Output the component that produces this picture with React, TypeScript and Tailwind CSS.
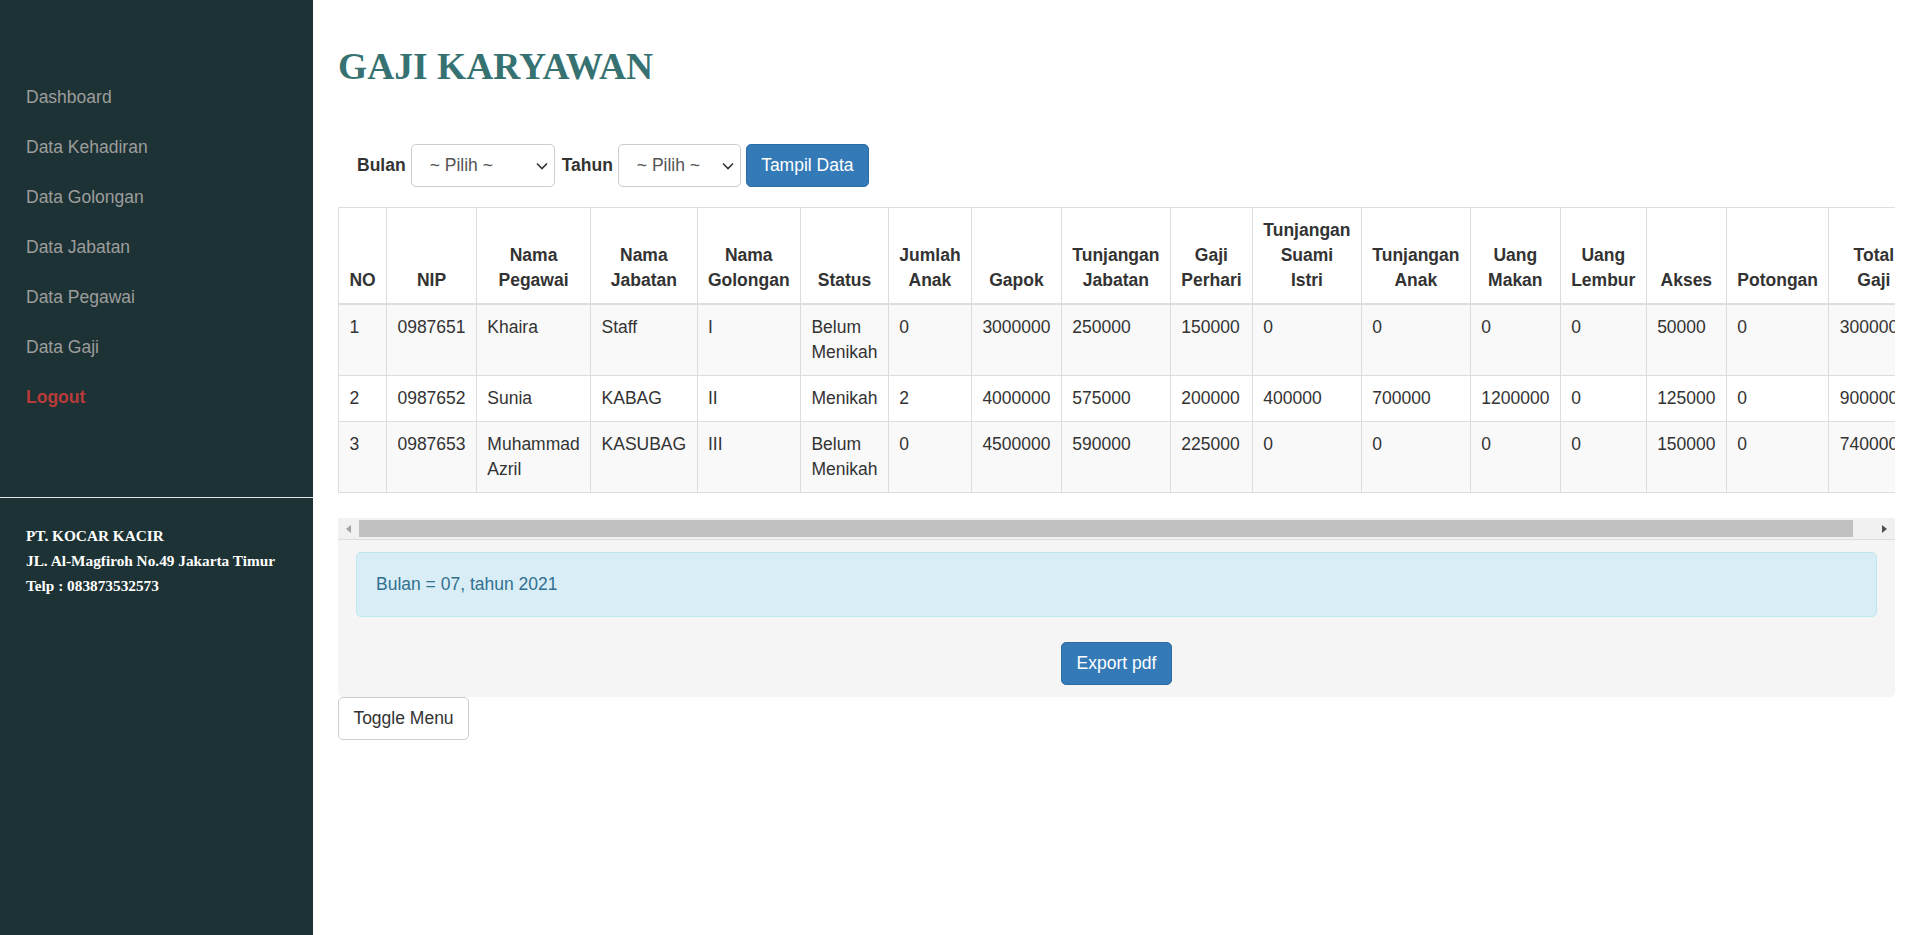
import React from "react";

const navItems = [
  "Dashboard",
  "Data Kehadiran",
  "Data Golongan",
  "Data Jabatan",
  "Data Pegawai",
  "Data Gaji",
];

const headers = [
  "NO",
  "NIP",
  "Nama Pegawai",
  "Nama Jabatan",
  "Nama Golongan",
  "Status",
  "Jumlah Anak",
  "Gapok",
  "Tunjangan Jabatan",
  "Gaji Perhari",
  "Tunjangan Suami Istri",
  "Tunjangan Anak",
  "Uang Makan",
  "Uang Lembur",
  "Akses",
  "Potongan",
  "Total Gaji",
];

const rows = [
  ["1", "0987651", "Khaira", "Staff", "I", "Belum Menikah", "0", "3000000", "250000", "150000", "0", "0", "0", "0", "50000", "0", "3000000"],
  ["2", "0987652", "Sunia", "KABAG", "II", "Menikah", "2", "4000000", "575000", "200000", "400000", "700000", "1200000", "0", "125000", "0", "9000000"],
  ["3", "0987653", "Muhammad Azril", "KASUBAG", "III", "Belum Menikah", "0", "4500000", "590000", "225000", "0", "0", "0", "0", "150000", "0", "7400000"],
];

function Chevron() {
  return (
    <svg width="12" height="8" viewBox="0 0 12 8" className="absolute right-[6px] top-1/2 -translate-y-1/2" aria-hidden="true">
      <path d="M1 1.5 L6 6.5 L11 1.5" fill="none" stroke="#333" strokeWidth="1.6" />
    </svg>
  );
}

function Select({ width }: { width: string }) {
  return (
    <div className={`relative flex h-[43px] items-center rounded-[5px] border border-[#ccc] bg-white pl-[18px] text-[#555] ${width}`}>
      ~ Pilih ~
      <Chevron />
    </div>
  );
}

export default function App() {
  return (
    <div className="flex h-[935px] w-full overflow-hidden bg-white font-['Liberation_Sans',Arial,sans-serif] text-[17.5px] leading-[25px] text-[#333]">
      <aside className="flex w-[313px] shrink-0 flex-col bg-[#1d3234]">
        <nav className="pt-[72px]">
          {navItems.map((item) => (
            <a key={item} className="block px-[26px] py-[12.5px] text-[#9d9d9d]">
              {item}
            </a>
          ))}
          <a className="block px-[26px] py-[12.5px] font-bold text-[#b83a3a]">Logout</a>
        </nav>
        <div className="mt-[75px] h-px bg-[#e6e6e6]" />
        <div className="px-[26px] pt-[25px] font-['Georgia','Liberation_Serif',serif] text-[15.3px] font-bold text-white">
          <p>PT. KOCAR KACIR</p>
          <p>JL. Al-Magfiroh No.49 Jakarta Timur</p>
          <p>Telp : 083873532573</p>
        </div>
      </aside>

      <main className="min-w-0 flex-1 pl-[25px] pr-[23px]">
        <h1 className="mt-[46px] font-['Liberation_Serif','Times_New_Roman',serif] text-[37.5px] leading-[41px] font-bold text-[#377272]">
          GAJI KARYAWAN
        </h1>

        <div className="mt-[57px] flex h-[43px] items-center pl-[19px]">
          <span className="mr-[5px] font-bold">Bulan</span>
          <Select width="w-[144px]" />
          <span className="ml-[7px] mr-[5px] font-bold">Tahun</span>
          <Select width="w-[123px]" />
          <button className="ml-[5px] h-[43px] w-[123px] rounded-[5px] border border-[#2e6da4] bg-[#337ab7] text-white">
            Tampil Data
          </button>
        </div>

        <div className="mt-[20px] overflow-hidden">
          <div className="pb-[25px]">
            <table className="w-full border-collapse">
              <thead>
                <tr>
                  {headers.map((h) => (
                    <th
                      key={h}
                      className="border border-b-2 border-[#ddd] bg-white px-[10.4px] py-[10px] text-center align-bottom font-bold"
                    >
                      {h}
                    </th>
                  ))}
                </tr>
              </thead>
              <tbody>
                {rows.map((row, i) => (
                  <tr key={row[0]} className={i % 2 === 0 ? "bg-[#f9f9f9]" : "bg-white"}>
                    {row.map((cell, j) => (
                      <td key={j} className="border border-[#ddd] px-[10.4px] py-[10px] text-left align-top">
                        {cell}
                      </td>
                    ))}
                  </tr>
                ))}
              </tbody>
            </table>
          </div>
          <div className="flex h-[21px] items-stretch bg-[#f1f1f1]">
            <div className="flex w-[21px] items-center justify-center">
              <svg width="6" height="8" viewBox="0 0 6 8" aria-hidden="true">
                <path d="M5 0 L0 4 L5 8 Z" fill="#a3a3a3" />
              </svg>
            </div>
            <div className="my-[2px] w-[1494px] bg-[#c1c1c1]" />
            <div className="flex-1" />
            <div className="flex w-[21px] items-center justify-center">
              <svg width="6" height="8" viewBox="0 0 6 8" aria-hidden="true">
                <path d="M0 0 L5 4 L0 8 Z" fill="#505050" />
              </svg>
            </div>
          </div>
        </div>

        <div className="rounded-b-[5px] border-t border-[#ddd] bg-[#f5f5f5] px-[18px] py-[12px]">
          <div className="rounded-[5px] border border-[#bce8f1] bg-[#d9edf7] px-[19px] py-[19px] text-[#31708f]">
            Bulan = 07, tahun 2021
          </div>
          <div className="mt-[25px] flex justify-center">
            <button className="h-[43px] w-[111px] rounded-[5px] border border-[#2e6da4] bg-[#337ab7] text-white">
              Export pdf
            </button>
          </div>
        </div>

        <button className="h-[43px] w-[131px] rounded-[5px] border border-[#ccc] bg-white text-[#333]">
          Toggle Menu
        </button>
      </main>
    </div>
  );
}
